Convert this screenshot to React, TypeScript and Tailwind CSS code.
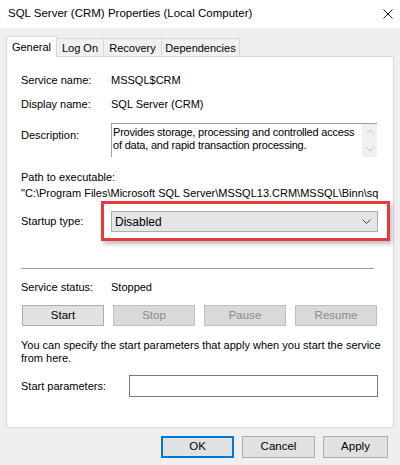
import { ReactNode } from "react";

const font = { fontFamily: '"Liberation Sans", Arial, sans-serif' };

function Tab({ label, width, active }: { label: string; width: string; active?: boolean }) {
  if (active) {
    return (
      <div className={`relative z-10 -mb-px h-[21px] ${width} text-center pt-[3px] bg-white border border-b-0 border-[#d9d9d9] text-[11px] leading-[15px] text-black`}>
        {label}
      </div>
    );
  }
  return (
    <div className={`h-[18px] ${width} text-center bg-[#f0f0f0] border border-l-0 border-b-0 border-[#d9d9d9] text-[11px] leading-[18px] text-black`}>
      {label}
    </div>
  );
}

function Field({ label, children }: { label: string; children: ReactNode }) {
  return (
    <div className="flex h-[16px] items-center text-[11px] text-black">
      <span className="w-[90px] shrink-0">{label}</span>
      {children}
    </div>
  );
}

function SvcButton({ label, disabled }: { label: string; disabled?: boolean }) {
  return (
    <button
      className={
        disabled
          ? "w-[82px] h-[21px] border border-[#bfbfbf] bg-[#d9d9d9] text-[11.5px] text-[#8a8a8a]"
          : "w-[82px] h-[21px] border border-[#adadad] bg-[#e1e1e1] text-[11.5px] text-black"
      }
    >
      {label}
    </button>
  );
}

export default function App() {
  return (
    <div className="w-[400px] h-[465px] bg-[#efefef] flex flex-col overflow-hidden" style={font}>
      {/* title bar */}
      <div className="h-[28px] bg-white flex items-center justify-between pl-[8px] pr-[7px]">
        <span className="text-[11.5px] text-black">SQL Server (CRM) Properties (Local Computer)</span>
        <svg width="10" height="10" viewBox="0 0 10 10" className="mt-[-1px]">
          <path d="M0.5 0.5L9.5 9.5M9.5 0.5L0.5 9.5" stroke="#111" strokeWidth="1" />
        </svg>
      </div>

      {/* tabs */}
      <div className="flex items-end px-[6px] mt-[8px]">
        <Tab label="General" width="w-[51px]" active />
        <Tab label="Log On" width="w-[47px]" />
        <Tab label="Recovery" width="w-[58px]" />
        <Tab label="Dependencies" width="w-[78px]" />
      </div>

      {/* tab page */}
      <div className="mx-[6px] h-[372px] bg-white border border-[#d9d9d9] pl-[14px] pt-[15px] flex flex-col">
        <Field label="Service name:">
          <span>MSSQL$CRM</span>
        </Field>
        <div className="mt-[8px]">
          <Field label="Display name:">
            <span>SQL Server (CRM)</span>
          </Field>
        </div>

        <div className="mt-[11px] flex text-[11px] text-black">
          <span className="w-[90px] shrink-0 pt-[4px]">Description:</span>
          <div className="w-[266px] h-[34px] border-t border-l border-[#a0a0a0] flex">
            <p className="flex-1 pl-[1px] leading-[12.5px] pt-[2px] tracking-[-0.2px]">
              Provides storage, processing and controlled access of data, and rapid transaction processing.
            </p>
            <div className="w-[15px] bg-[#f0f0f0] flex flex-col items-center justify-between py-[5px]">
              <svg width="8" height="5" viewBox="0 0 8 5">
                <path d="M0.5 4.5L4 1L7.5 4.5" fill="none" stroke="#c2c2c2" />
              </svg>
              <svg width="8" height="5" viewBox="0 0 8 5">
                <path d="M0.5 0.5L4 4L7.5 0.5" fill="none" stroke="#c2c2c2" />
              </svg>
            </div>
          </div>
        </div>

        <div className="mt-[12px] h-[16px] flex items-center text-[11px] text-black">Path to executable:</div>
        <div className="h-[16px] w-[357px] overflow-hidden whitespace-nowrap flex items-center text-[11px] text-black">
          "C:\Program Files\Microsoft SQL Server\MSSQL13.CRM\MSSQL\Binn\sqlservr.exe" -sCRM
        </div>

        <div className="mt-[10px] flex items-center text-[11px] text-black">
          <span className="w-[90px] shrink-0">Startup type:</span>
          <div className="relative w-[267px] h-[21px] bg-[#e5e5e5] border border-[#adadad] flex items-center justify-between pl-[3px] pr-[6px]">
            <span className="text-[12px]">Disabled</span>
            <svg width="9" height="5" viewBox="0 0 9 5">
              <path d="M0.5 0.5L4.5 4.5L8.5 0.5" fill="none" stroke="#444" />
            </svg>
            {/* highlight frame */}
            <div className="absolute -left-[11px] -top-[11px] -right-[13px] -bottom-[10px] border-[3px] border-[#e8383d] shadow-[2px_3px_4px_rgba(0,0,0,0.25)] pointer-events-none" />
          </div>
        </div>

        <div className="mt-[36px] h-px w-[353px] bg-[#a0a0a0]" />

        <div className="mt-[10px]">
          <Field label="Service status:">
            <span>Stopped</span>
          </Field>
        </div>

        <div className="mt-[10px] ml-px flex gap-[9px]">
          <SvcButton label="Start" />
          <SvcButton label="Stop" disabled />
          <SvcButton label="Pause" disabled />
          <SvcButton label="Resume" disabled />
        </div>

        <p className="mt-[13px] w-[360px] text-[11px] leading-[13px] text-black">
          You can specify the start parameters that apply when you start the service from here.
        </p>

        <div className="mt-[10px] flex items-center text-[11px] text-black">
          <span className="w-[108px] shrink-0">Start parameters:</span>
          <div className="w-[249px] h-[22px] border border-[#7a7a7a] bg-white" />
        </div>
      </div>

      {/* dialog buttons */}
      <div className="mt-[8px] flex justify-end gap-[8px] pr-[12px]">
        <button className="w-[73px] h-[22px] border-2 border-[#0078d7] bg-[#e1e1e1] text-[11.5px] text-black">OK</button>
        <button className="w-[73px] h-[22px] border border-[#adadad] bg-[#e1e1e1] text-[11.5px] text-black">Cancel</button>
        <button className="w-[65px] h-[22px] border border-[#adadad] bg-[#e1e1e1] text-[11.5px] text-black">Apply</button>
      </div>
    </div>
  );
}
